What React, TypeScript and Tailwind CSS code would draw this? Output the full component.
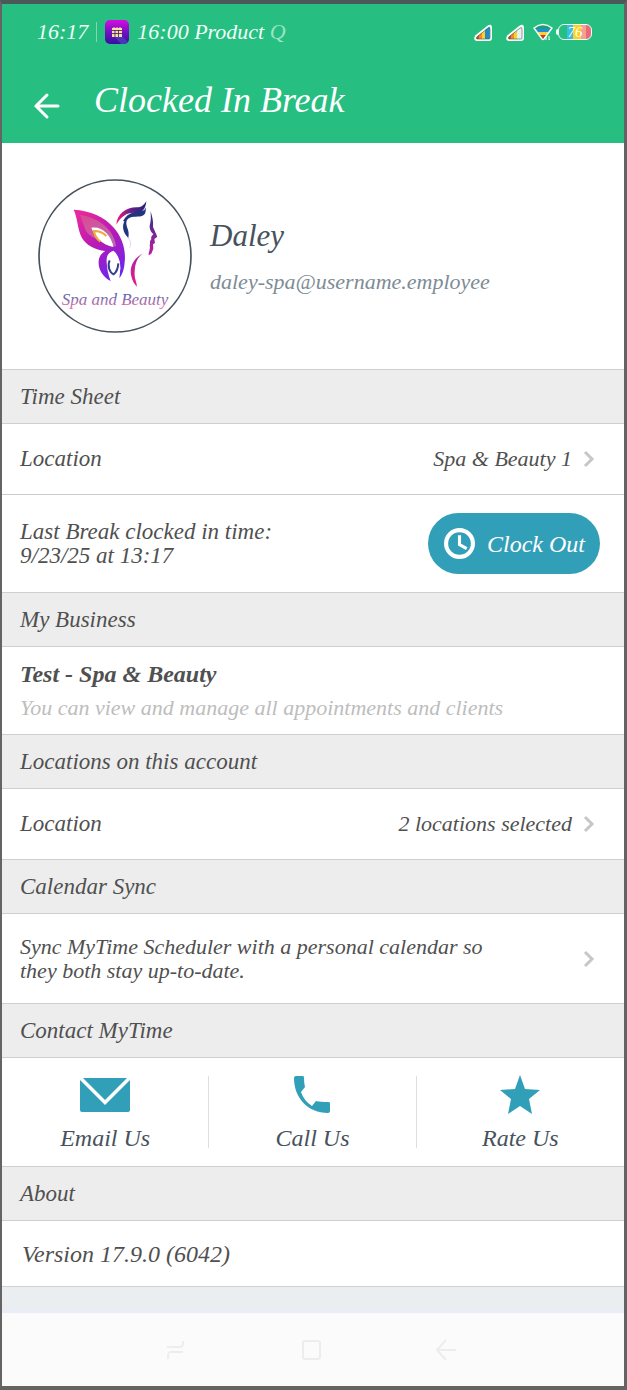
import type { ReactNode } from "react";

const contacts = [
  { label: "Email Us", href: "#email", icon: <MailIcon /> },
  { label: "Call Us", href: "#call", icon: <PhoneIcon /> },
  { label: "Rate Us", href: "#rate", icon: <StarIcon /> }
];

export default function App() {
  return (
    <div className="border-y-4 border-r-[3px] border-l-2 border-[#646464] border-t-[#4b5858] bg-white font-['Liberation_Serif',serif] text-[22px] leading-6 text-[#505050] italic">
      <header className="bg-[#26be81] text-white">
        <StatusBar />
        <div className="flex h-[83px] items-center pl-7">
          <button type="button" aria-label="Back" className="mt-2 grid size-8 place-items-center">
            <BackIcon />
          </button>
          <h1 className="ml-8 pb-1 text-[36px] leading-10">Clocked In Break</h1>
        </div>
      </header>

      <main>
        <section className="flex min-h-[226px] items-center gap-[18px] px-9">
          <SpaLogo />
          <div className="min-w-0 flex-1">
            <h2 className="text-[31px] leading-9 text-[#47525c]">Daley</h2>
            <p className="mt-4 text-[#7d8c94]">daley-spa@username.employee</p>
          </div>
        </section>

        <SectionTitle>Time Sheet</SectionTitle>
        <LinkRow label="Location" value="Spa & Beauty 1" />
        <div className="flex min-h-[98px] items-center justify-between border-t border-[#cbcbcb] pr-6 pl-[18px]">
          <p className="text-[23px]">
            Last Break clocked in time:
            <br />
            9/23/25 at 13:17
          </p>
          <button
            type="button"
            className="flex h-[61px] w-[172px] items-center gap-3 rounded-full bg-[#329fb8] pl-4 text-[24px] text-white italic"
          >
            <ClockIcon />
            Clock Out
          </button>
        </div>

        <SectionTitle>My Business</SectionTitle>
        <div className="flex min-h-[87px] flex-col justify-center gap-2.5 px-[18px]">
          <p className="text-[24px] font-bold">Test - Spa &amp; Beauty</p>
          <p className="text-[#bdbdbd]">You can view and manage all appointments and clients</p>
        </div>

        <SectionTitle>Locations on this account</SectionTitle>
        <LinkRow label="Location" value="2 locations selected" />

        <SectionTitle>Calendar Sync</SectionTitle>
        <button type="button" className="flex min-h-[89px] w-full items-center justify-between pr-6 pl-[18px] text-left italic">
          <span className="max-w-[500px]">Sync MyTime Scheduler with a personal calendar so they both stay up-to-date.</span>
          <Chevron />
        </button>

        <SectionTitle>Contact MyTime</SectionTitle>
        <nav className="grid min-h-[108px] grid-cols-3 items-center divide-x divide-[#dedede]">
          {contacts.map((contact) => (
            <a key={contact.label} href={contact.href} className="flex h-[72px] flex-col items-center text-[#47525c]">
              <span className="flex h-[38px] items-center">{contact.icon}</span>
              <span className="mt-3 text-[24px]">{contact.label}</span>
            </a>
          ))}
        </nav>

        <SectionTitle>About</SectionTitle>
        <p className="flex min-h-[65px] items-center px-5 text-[24px]">Version 17.9.0 (6042)</p>
        <div className="h-[27px] border-t border-[#cbd3d8] bg-linear-to-b from-[#eaeef1] from-75% to-[#e9edf5] to-90%" />
      </main>

      <footer className="flex h-[73px] items-center justify-center gap-[111px] bg-[#fbfbfb] pr-1 text-[#ededed]">
        <button type="button" aria-label="Recent apps">
          <svg className="size-6" viewBox="0 0 24 24" fill="none" stroke="currentColor" strokeWidth="2" aria-hidden="true">
            <path d="M3 9h14q2 0 2-6M19 14H6q-2 0-2 7" />
          </svg>
        </button>
        <button type="button" aria-label="Home">
          <svg className="size-6" viewBox="0 0 24 24" fill="none" stroke="currentColor" strokeWidth="2" aria-hidden="true">
            <rect x="4" y="3" width="17" height="18" rx="2" />
          </svg>
        </button>
        <button type="button" aria-label="System back">
          <svg className="size-6" viewBox="0 0 24 24" fill="none" stroke="currentColor" strokeWidth="2" aria-hidden="true">
            <path d="M22 12H3M12 2 3 12l9 10" />
          </svg>
        </button>
      </footer>
    </div>
  );
}

function SectionTitle({ children }: { children: ReactNode }) {
  return (
    <h2 className="flex min-h-[55px] items-center border-y border-[#cfcfcf] bg-[#ededed] px-[18px] text-[23px]">{children}</h2>
  );
}

function LinkRow({ label, value }: { label: string; value: string }) {
  return (
    <button type="button" className="flex min-h-[70px] w-full items-center justify-between pr-6 pl-[18px] text-left italic">
      <span className="text-[23px]">{label}</span>
      <span className="flex items-center gap-2">
        {value}
        <Chevron />
      </span>
    </button>
  );
}

function StatusBar() {
  return (
    <div className="flex h-14 items-center justify-between pr-8 pl-[35px]">
      <div className="flex items-center gap-2 text-[#effff7]">
        <span>16:17</span>
        <span className="h-5 w-px bg-[#7bdab2]" />
        <CalendarAppIcon />
        <span>
          16:00 Product <span className="text-[#9be3c5]">Q</span>
        </span>
      </div>
      <div className="flex items-center">
        <Signal full />
        <Signal />
        <WifiIcon />
        <Battery />
      </div>
    </div>
  );
}

function CalendarAppIcon() {
  return (
    <svg className="size-6" viewBox="0 0 24 24" aria-hidden="true">
      <defs>
        <linearGradient id="app-bg" x1="0" y1="0" x2="0" y2="1">
          <stop offset="0" stopColor="#d80be0" />
          <stop offset="0.5" stopColor="#7410c4" />
          <stop offset="1" stopColor="#34109e" />
        </linearGradient>
      </defs>
      <rect width="24" height="24" rx="5" fill="url(#app-bg)" />
      <path d="m17 16 6 6-3 2h-4l-7-8Z" fill="#4a35bb" />
      <rect x="7" y="8" width="10" height="9" fill="#f8dfa5" />
      <path d="M7 10.5h10M7 13.5h10M10 10v7M13.5 10v7" stroke="#421763" strokeWidth="0.8" />
      <path d="M9 7v2M12 7v2M15 7v2" stroke="#f8dfa5" />
    </svg>
  );
}

function Signal({ full = false }: { full?: boolean }) {
  const id = full ? "signal-full" : "signal-low";
  return (
    <svg className="mr-3 h-[19px] w-5" viewBox="0 0 20 19" aria-hidden="true">
      <defs>
        <linearGradient id={id}>
          <stop offset="0.25" stopColor="#d6473c" />
          <stop offset="0.25" stopColor="#f28b22" />
          <stop offset="0.42" stopColor="#f28b22" />
          <stop offset="0.42" stopColor="#ffd02b" />
          <stop offset="0.62" stopColor="#ffd02b" />
          <stop offset="0.62" stopColor={full ? "#2188d4" : "#e1f3f4"} />
          <stop offset="0.85" stopColor={full ? "#2188d4" : "#e1f3f4"} />
          <stop offset="0.85" stopColor={full ? "#25b2a1" : "#e1f3f4"} />
        </linearGradient>
      </defs>
      <path
        d="M3 13 15 3.5q3-2 3 1V15q0 2-2 2H4q-3 0-1-4Z"
        fill={`url(#${id})`}
        stroke="#f4fff9"
        strokeWidth="2"
        strokeLinejoin="round"
      />
      <path d="M4 14 15 5q2-1 2 1v9q0 1-1 1H4q-1-1 0-2Z" fill="none" stroke="#555" strokeWidth="0.6" />
    </svg>
  );
}

function WifiIcon() {
  return (
    <svg className="-ml-1 h-[18px] w-5" viewBox="0 0 20 18" aria-hidden="true">
      <defs>
        <clipPath id="wifi-fan">
          <path d="M1 5Q10-2 19 5l-8 11q-1 1-2 0Z" />
        </clipPath>
      </defs>
      <g clipPath="url(#wifi-fan)">
        <rect width="20" height="18" fill="#1e9f70" />
        <rect y="6" width="20" height="12" fill="#228de0" />
        <rect y="9" width="20" height="9" fill="#ffd02b" />
        <rect y="12" width="20" height="6" fill="#c43c3a" />
      </g>
      <path d="M1 5Q10-2 19 5l-8 11q-1 1-2 0Z" fill="none" stroke="#f4fff9" strokeWidth="1.5" strokeLinejoin="round" />
      <path d="M13 17v-4l-1 1M16 13v4l1-1" stroke="#fff" fill="none" />
    </svg>
  );
}

function Battery() {
  return (
    <div className="ml-[3px] flex items-center">
      <span className="h-1.5 w-0.5 rounded-l bg-white" />
      <span className="flex h-4 w-[34px] items-center justify-center rounded-md border border-[#eefff6] bg-[linear-gradient(90deg,#26be81_25%,#38bfe5_25%_43%,#ffd11a_43%_70%,#f6a095_70%_83%,#e86b7b_83%)] text-[15px] leading-4 text-white">
        76
      </span>
    </div>
  );
}

function BackIcon() {
  return (
    <svg className="size-8" viewBox="0 0 32 32" fill="none" stroke="currentColor" strokeWidth="3" aria-hidden="true">
      <path d="M28 16H6M17 5 6 16l11 11" strokeLinecap="round" />
    </svg>
  );
}

function Chevron() {
  return (
    <svg className="h-5 w-5 shrink-0 text-[#c7c7c7]" viewBox="0 0 20 20" fill="none" stroke="currentColor" strokeWidth="3" aria-hidden="true">
      <path d="m5 3 7 7-7 7" />
    </svg>
  );
}

function ClockIcon() {
  return (
    <svg className="size-[31px]" viewBox="0 0 30 30" fill="none" stroke="currentColor" strokeWidth="4" aria-hidden="true">
      <circle cx="15" cy="15" r="13" />
      <path d="M15 7v9l7 4" strokeWidth="3" />
    </svg>
  );
}

function MailIcon() {
  return (
    <svg className="h-[38px] w-[50px] text-[#329fb8]" viewBox="0 0 50 38" fill="currentColor" aria-hidden="true">
      <path d="M3 2h44L25 24Z" />
      <path d="m0 4 25 25L50 4v30q0 2-2 2H2q-2 0-2-2Z" />
    </svg>
  );
}

function PhoneIcon() {
  return (
    <svg className="h-[38px] w-[38px] text-[#329fb8]" viewBox="0 0 38 38" fill="currentColor" aria-hidden="true">
      <path d="M3 0h7q1 0 1 2 0 5 1 9l-4 5q3 9 11 14l4-5q4 1 13 1 1 0 1 2v7q0 2-2 2C15 37 1 22 1 2q0-2 2-2Z" />
    </svg>
  );
}

function StarIcon() {
  return (
    <svg className="h-[42px] w-[42px] text-[#329fb8]" viewBox="0 0 42 42" fill="currentColor" aria-hidden="true">
      <path d="m21 1 5 14 15 1-11 9 3 15-12-8-12 8 3-15-11-9 15-1Z" />
    </svg>
  );
}

function SpaLogo() {
  return (
    <svg className="size-[154px] shrink-0" viewBox="25 25 462 462" role="img" aria-label="Spa and Beauty">
      <defs>
        <linearGradient id="wing" x1="0.2" y1="0" x2="0.7" y2="1">
          <stop offset="0" stopColor="#e7299c" />
          <stop offset="0.5" stopColor="#b51ab6" />
          <stop offset="1" stopColor="#6e25ef" />
        </linearGradient>
        <linearGradient id="wing-inner" x1="0" y1="0" x2="1" y2="1">
          <stop offset="0" stopColor="#dc4a91" />
          <stop offset="1" stopColor="#bb6ab3" />
        </linearGradient>
        <linearGradient id="hair">
          <stop offset="0" stopColor="#f51678" />
          <stop offset="0.5" stopColor="#63208b" />
          <stop offset="1" stopColor="#202576" />
        </linearGradient>
        <linearGradient id="neck" x1="0" y1="0" x2="0" y2="1">
          <stop offset="0" stopColor="#a52a9c" />
          <stop offset="1" stopColor="#ed1688" />
        </linearGradient>
        <linearGradient id="face" x1="0" y1="0" x2="0" y2="1">
          <stop offset="0" stopColor="#263180" />
          <stop offset="1" stopColor="#c51ba8" />
        </linearGradient>
        <linearGradient id="caption" x1="0" y1="0" x2="0" y2="1">
          <stop offset="0.2" stopColor="#5067ae" />
          <stop offset="1" stopColor="#ef6fa8" />
        </linearGradient>
      </defs>
      <circle cx="256" cy="256" r="228" fill="#fff" stroke="#47525c" strokeWidth="5" />
      <path d="M132 117c50 3 93 21 119 53 28 30 38 71 34 104-2 25-7 37-16 49 6-38 1-69-18-83-18 6-21 19-20 35 1 22 5 38 12 56-25-12-38-37-36-60 1-14 9-24 20-30-31-3-58-18-70-39-14-25-13-61-25-85Z" fill="url(#wing)" />
      <path d="M151 133c37 5 71 23 91 50 11 16 16 31 17 45-15-6-18-10-26-8-7-4-14-11-28-14-25-9-37-20-42-40Z" fill="url(#wing-inner)" />
      <path d="M185 171c33-5 57 20 67 58-35-7-56-29-67-58Z" fill="#fff" />
      <path d="M212 213c-11-8-17-18-19-32 17 0 28 5 37 15" fill="none" stroke="#edaa3d" strokeWidth="6" />
      <path d="M250 243c-20 13-21 39-9 66 14 23 28 8 31-14 1-20-5-38-22-52Z" fill="#fff" />
      <path d="M240 269c-8 16 0 37 12 42 10-8 13-19 14-33" fill="none" stroke="#343f91" strokeWidth="6" />
      <path d="M260 162c2-32 28-52 61-52 14 0 22-7 29-19-2 30-18 37-38 35-22 0-37 11-52 36Z" fill="url(#hair)" />
      <path d="M280 151c16-30 42-26 64-32l4-9c3 29-13 28-34 28-23 1-28 13-21 34 4 10 5 17 3 30-17-17-19-35-12-50Z" fill="#23347f" />
      <path d="M363 121c4 16 9 31 7 48l13 29-9 7 2 12-6 4 1 13-6 15-8 5c-1-10 6-19 3-31 4-5-3-8 5-18-2-9 4-10 6-15-5-4-12-13-11-25 5-17 3-30 3-44Z" fill="url(#face)" />
      <path d="M338 249c-27 15-40 42-33 68 3 14 10 25 17 31-1-15-9-25-7-45 1-20 5-39 23-54Z" fill="url(#neck)" />
      <path d="M296 202c8 10 9 19 4 29" fill="none" stroke="#dcd4f2" strokeWidth="3" />
      <text x="96" y="403" fontSize="51" fontStyle="italic" fill="url(#caption)">Spa and Beauty</text>
    </svg>
  );
}
